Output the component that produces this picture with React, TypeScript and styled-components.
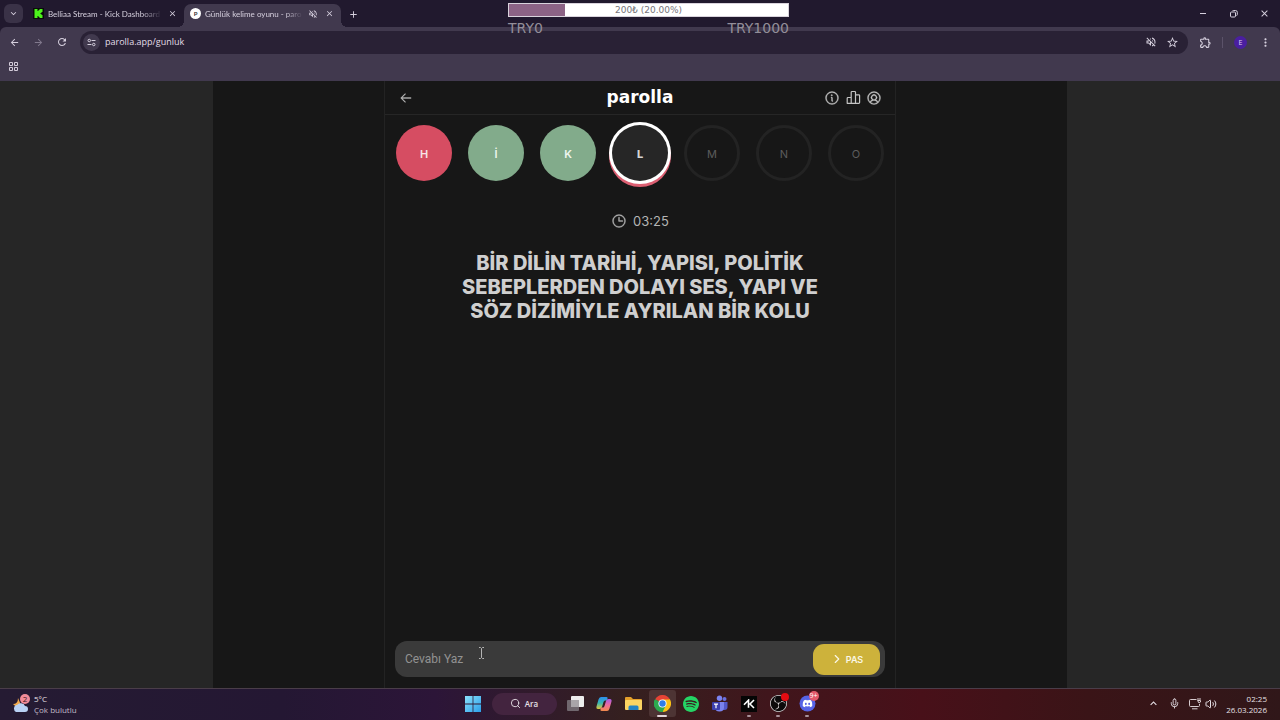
import React from 'react';
import styled, { createGlobalStyle, css } from 'styled-components';
import { SiKick, SiSpotify, SiDiscord, SiObsstudio } from 'react-icons/si';
import { PiUserCircle, PiInfo, PiClock, PiArrowLeft } from 'react-icons/pi';
import {
  MdArrowBack,
  MdArrowForward,
  MdRefresh,
  MdClose,
  MdAdd,
  MdStarBorder,
  MdMoreVert,
  MdKeyboardArrowDown,
  MdKeyboardArrowUp,
  MdOutlineExtension,
  MdOutlineVolumeOff,
} from 'react-icons/md';
import { Mic, Search, Volume2, ChevronRight } from 'lucide-react';

const GlobalStyle = createGlobalStyle`
  *, *::before, *::after { box-sizing: border-box; }
  body {
    margin: 0;
    background: #171717;
    font-family: 'Open Sans', 'Noto Sans', sans-serif;
  }
  button, input { font: inherit; color: inherit; }
  button { border: 0; padding: 0; background: none; cursor: pointer; }
  svg { display: block; flex: none; }
`;

const Screen = styled.div`
  position: relative;
  display: flex;
  flex-direction: column;
  min-height: 100vh;
`;

/* ---------- browser frame ---------- */

const TabStrip = styled.header`
  display: flex;
  align-items: flex-end;
  height: 27px;
  background: #21192e;
  color: #d6d0de;
`;

const TabSearch = styled.button`
  display: grid;
  place-items: center;
  width: 19px;
  height: 19px;
  margin: 0 4px;
  align-self: center;
  border-radius: 6px;
  background: #3a3247;
`;

const Tab = styled.div<{ $active?: boolean }>`
  position: relative;
  display: flex;
  align-items: center;
  gap: 4px;
  width: 157px;
  height: 23px;
  padding: 0 6px 4px;
  font-family: Lato, 'Open Sans', sans-serif;
  font-size: 8px;
  line-height: 12px;
  ${(p) =>
    p.$active &&
    css`
      border-radius: 7px 7px 0 0;
      background: #41394e;
      &::before,
      &::after {
        content: '';
        position: absolute;
        bottom: 0;
        width: 6px;
        height: 6px;
      }
      &::before {
        left: -6px;
        background: radial-gradient(circle at 0 0, transparent 6px, #41394e 6px);
      }
      &::after {
        right: -6px;
        background: radial-gradient(circle at 100% 0, transparent 6px, #41394e 6px);
      }
    `}
`;

const TabTitle = styled.span`
  flex: 1;
  min-width: 0;
  overflow: hidden;
  white-space: nowrap;
  mask-image: linear-gradient(90deg, #000 82%, transparent);
`;

const KickBadge = styled.span`
  display: grid;
  place-items: center;
  width: 11px;
  height: 11px;
  background: #0b0b0b;
  color: #4cf21c;
`;

const ParollaBadge = styled.span`
  display: grid;
  place-items: center;
  width: 11px;
  height: 11px;
  border-radius: 50%;
  background: #fff;
  color: #333;
  font-size: 6px;
  font-weight: 700;
  line-height: 8px;
`;

const IconButton = styled.button<{ $w?: number; $dim?: boolean }>`
  display: grid;
  place-items: center;
  width: ${(p) => p.$w ?? 12}px;
  height: 18px;
  flex: none;
  color: ${(p) => (p.$dim ? '#81798d' : '#d6d0de')};
`;

const NewTab = styled(IconButton)`
  margin: 0 0 4px 3px;
`;

const WindowControls = styled.div`
  display: flex;
  align-self: center;
  margin-left: auto;
`;

const Toolbar = styled.div`
  display: flex;
  align-items: center;
  height: 30px;
  padding: 0 3px 0 2px;
  border-radius: 6px 6px 0 0;
  background: #41394e;
`;

const ToolbarBack = styled.div`
  background: #21192e;
`;

const Omnibox = styled.div`
  display: flex;
  align-items: center;
  flex: 1;
  gap: 5px;
  height: 23px;
  margin: 0 4px 0 6px;
  padding: 0 10px 0 3px;
  border-radius: 12px;
  background: #292135;
`;

const SiteInfo = styled.button`
  display: grid;
  place-items: center;
  width: 17px;
  height: 17px;
  border-radius: 50%;
  background: #41394e;
  color: #d6d0de;
`;

const Address = styled.input`
  flex: 1;
  min-width: 0;
  padding: 0;
  border: 0;
  outline: 0;
  background: none;
  color: #e2dde8;
  font-size: 9px;
  line-height: 14px;
`;

const Divider = styled.span`
  width: 1px;
  height: 11px;
  margin: 0 5px 0 4px;
  background: #5b5269;
`;

const Profile = styled.button`
  width: 13px;
  height: 13px;
  margin: 0 6px;
  border-radius: 50%;
  background: #4a1fa0;
  color: #ddd0f5;
  font-size: 7px;
  line-height: 13px;
`;

const Bookmarks = styled.nav`
  display: flex;
  align-items: center;
  height: 24px;
  padding: 0 7px 5px;
  background: #41394e;
`;

/* ---------- donation goal overlay ---------- */

const Goal = styled.section`
  position: absolute;
  top: 3px;
  left: 50%;
  width: 281px;
  margin-left: -132px;
  font-family: 'DejaVu Sans', sans-serif;
  color: #938e99;
`;

const GoalTrack = styled.div`
  position: relative;
  height: 14px;
  border: 1px solid #d9d3dc;
  background: #fff;
  color: #77747a;
  font-size: 9px;
  line-height: 13px;
  text-align: center;
`;

const GoalFill = styled.div`
  position: absolute;
  inset: 0 auto 0 0;
  background: #8c6385;
`;

const GoalText = styled.span`
  position: relative;
`;

const GoalRange = styled.div`
  display: flex;
  justify-content: space-between;
  padding-top: 2px;
  font-size: 14px;
  line-height: 18px;
`;

/* ---------- game page ---------- */

const Page = styled.main`
  display: flex;
  flex: 1;
  justify-content: center;
  background: #262626;
  font-family: Inter, Roboto, sans-serif;
`;

const Stage = styled.div`
  display: flex;
  justify-content: center;
  width: 66.7%;
  min-width: 512px;
  background: #171717;
`;

const Game = styled.div`
  display: flex;
  flex-direction: column;
  width: 512px;
  border: solid #232323;
  border-width: 0 1px;
`;

const GameHeader = styled.header`
  display: grid;
  grid-template-columns: 1fr auto 1fr;
  align-items: center;
  height: 34px;
  padding: 0 13px;
  border-bottom: 1px solid #262626;
  color: #c4c4c4;
`;

const Brand = styled.h1`
  margin: 0;
  padding-bottom: 2px;
  color: #fff;
  font-family: 'DejaVu Sans', sans-serif;
  font-size: 17px;
  font-weight: 700;
  line-height: 20px;
`;

const HeaderButton = styled.button`
  display: grid;
  place-items: center;
  width: 16px;
  height: 16px;
  stroke-width: 5px;
`;

const HeaderActions = styled.div`
  display: flex;
  justify-content: flex-end;
  gap: 5px;
`;

const Letters = styled.ol`
  display: flex;
  justify-content: center;
  gap: 16px;
  margin: 0;
  padding: 10px 0 30px;
  list-style: none;
`;

type LetterState = 'wrong' | 'right' | 'current' | 'idle';

const letterStyles = {
  wrong: css`
    background: #d64d62;
    color: #f7e3e6;
  `,
  right: css`
    background: #82ab8b;
    color: #eef6ef;
  `,
  current: css`
    background: #262626;
    color: #d4d4d4;
    font-weight: 800;
    box-shadow: 0 0 0 3px #fff, 0 3px 0 3px #dc5f72;
  `,
  idle: css`
    border: 3px solid #232323;
    color: #5c5c5c;
    font-weight: 400;
  `,
};

const Letter = styled.li<{ $state: LetterState }>`
  display: grid;
  place-items: center;
  width: 56px;
  height: 56px;
  padding-top: 1px;
  border-radius: 50%;
  font-size: 11px;
  font-weight: 600;
  ${(p) => letterStyles[p.$state]}
`;

const Timer = styled.div`
  display: flex;
  align-items: center;
  justify-content: center;
  gap: 6px;
  color: #b4b4b4;
  font-size: 13px;
  line-height: 20px;
  stroke-width: 5px;
`;

const Question = styled.h2`
  max-width: 400px;
  margin: 20px auto auto;
  color: #cfcfcf;
  font-size: 20px;
  font-weight: 800;
  line-height: 24px;
  text-align: center;
`;

const AnswerForm = styled.form`
  display: flex;
  align-items: center;
  height: 36px;
  margin: 0 10px 11px;
  padding: 0 5px 0 10px;
  border-radius: 12px;
  background: #3a3a3a;
`;

const AnswerInput = styled.input`
  flex: 1;
  min-width: 0;
  padding: 0;
  border: 0;
  outline: 0;
  background: none;
  color: #ddd;
  font-family: Roboto, sans-serif;
  font-size: 12px;
  &::placeholder {
    color: #929292;
    opacity: 1;
  }
`;

const PassButton = styled.button`
  display: flex;
  align-items: center;
  justify-content: center;
  gap: 2px;
  width: 67px;
  height: 31px;
  border-radius: 11px;
  background: #cdb23b;
  color: #fbf7e6;
  font-size: 9px;
  font-weight: 600;
`;

const Pointer = styled.svg`
  position: absolute;
  left: 478px;
  bottom: 61px;
`;

/* ---------- taskbar ---------- */

const Taskbar = styled.footer`
  display: grid;
  grid-template-columns: 1fr auto 1fr;
  align-items: center;
  height: 32px;
  padding-bottom: 2px;
  border-top: 1px solid #4a3d49;
  background: linear-gradient(90deg, #251b33 0%, #241733 22%, #2c1538 34%, #35201f 49%, #40161c 60%, #481019 72%, #3a1417 85%, #301719 100%);
  color: #e6e0e6;
  font-size: 8px;
  line-height: 11px;
`;

const Weather = styled.button`
  display: flex;
  align-items: center;
  gap: 4px;
  margin-left: 12px;
  justify-self: start;
  text-align: left;
`;

const Muted = styled.div`
  color: #c3bcc8;
`;

const Apps = styled.nav`
  display: flex;
  align-items: center;
  gap: 2px;
`;

const AppButton = styled.button<{ $active?: boolean; $running?: boolean }>`
  position: relative;
  display: grid;
  place-items: center;
  width: 27px;
  height: 27px;
  border-radius: 3px;
  background: ${(p) => (p.$active ? '#4d3434' : 'transparent')};
  ${(p) =>
    (p.$active || p.$running) &&
    css`
      &::after {
        content: '';
        position: absolute;
        bottom: 0;
        width: ${p.$active ? 10 : 4}px;
        height: 2px;
        border-radius: 1px;
        background: ${p.$active ? '#e3d5da' : '#a8929a'};
      }
    `}
`;

const SearchPill = styled.button`
  display: flex;
  align-items: center;
  justify-content: center;
  gap: 4px;
  width: 65px;
  height: 22px;
  margin: 0 3px;
  border-radius: 11px;
  background: #43243f;
  font-weight: 600;
`;

const Tray = styled.div`
  display: flex;
  align-items: center;
  justify-self: end;
  gap: 9px;
  padding-right: 13px;
`;

const TrayPair = styled.div`
  display: flex;
  align-items: center;
  gap: 4px;
`;

const Clock = styled.time`
  text-align: right;
`;

const BadgeDot = styled.span<{ $wide?: boolean }>`
  position: absolute;
  top: ${(p) => (p.$wide ? 1 : 3)}px;
  right: ${(p) => (p.$wide ? 2 : 3)}px;
  width: ${(p) => (p.$wide ? 10 : 8)}px;
  height: ${(p) => (p.$wide ? 10 : 8)}px;
  border-radius: 50%;
  background: ${(p) => (p.$wide ? '#e2596b' : '#e60b12')};
  color: #fff;
  font-size: 7px;
  line-height: 10px;
`;

const KickTile = styled.span`
  display: grid;
  place-items: center;
  width: 16px;
  height: 16px;
  background: #050505;
`;

const ObsTile = styled.span`
  display: grid;
  place-items: center;
  width: 17px;
  height: 17px;
  border-radius: 50%;
  background: #0c0a0b;
  color: #d9d4d6;
`;

/* ---------- drawings ---------- */

const TuneIcon = () => (
  <svg width="9" height="9" viewBox="0 0 18 18" fill="none" stroke="currentColor" strokeWidth="2">
    <circle cx="4.5" cy="5" r="2.5" />
    <path d="M9 5h8M1 13h8" />
    <circle cx="13.5" cy="13" r="2.5" />
  </svg>
);

const GridIcon = () => (
  <svg width="11" height="11" viewBox="0 0 11 11" fill="none" stroke="#d2cbd9" strokeWidth="1">
    <path d="M1.5 1.5h3v3h-3zM6.500 1.5h3v3h-3zM1.500 6.500h3v3h-3zM6.500 6.500h3v3h-3z" />
  </svg>
);

const MinimizeIcon = () => (
  <svg width="8" height="8" viewBox="0 0 8 8" stroke="currentColor">
    <path d="M1 3.500h6" />
  </svg>
);

const RestoreIcon = () => (
  <svg width="8" height="8" viewBox="0 0 8 8" fill="none" stroke="currentColor">
    <rect x="0.500" y="2" width="5" height="5" rx="1" />
    <path d="M2.500 1Q2.500 .5 3.500 .5H5.500Q7.300 .5 7.300 2.300V4.500Q7.300 5.500 6.500 5.500" />
  </svg>
);

const StatsIcon = () => (
  <svg width="15" height="15" viewBox="0 0 15 15" fill="none" stroke="currentColor" strokeWidth="1.200" strokeLinejoin="round">
    <path d="M1.200 13.300V8.300Q1.200 7.500 2 7.500H5.200V13.300ZM5.200 13.300V2.300Q5.200 1.500 6 1.500H8.700Q9.500 1.500 9.500 2.300V13.300ZM9.500 4.800H12.800Q13.600 4.800 13.600 5.600V12.500Q13.600 13.300 12.800 13.300H9.500" />
  </svg>
);

const WeatherIcon = () => (
  <svg width="18" height="20" viewBox="0 0 18 20">
    <path d="M6 4Q6 10 1 10Q4 14 9 11Z" fill="#f1a94c" />
    <path d="M4 18a4 4 0 0 1 0-7q1 0 1 0a4.500 4 0 0 1 8 1a3 3 0 0 1 0 6z" fill="#b9d2f5" />
    <circle cx="13" cy="5" r="5" fill="#f18c99" />
    <text x="13" y="8" textAnchor="middle" fontSize="8" fill="#3d1620">2</text>
  </svg>
);

const WindowsIcon = () => (
  <svg width="16" height="16" viewBox="0 0 16 16">
    <defs>
      <linearGradient id="win" x1="0" y1="0" x2="1" y2="1">
        <stop offset="0" stopColor="#8be2fb" />
        <stop offset="1" stopColor="#2b9fe9" />
      </linearGradient>
    </defs>
    <path d="M0 0h7.600v7.600H0zM8.400 0H16v7.600H8.400zM0 8.400h7.600V16H0zM8.400 8.400H16V16H8.400z" fill="url(#win)" />
  </svg>
);

const TaskViewIcon = () => (
  <svg width="17" height="15" viewBox="0 0 17 15">
    <rect x="4" y="0" width="13" height="11" rx="1" fill="#ededed" />
    <rect x="0" y="4" width="12" height="11" rx="1" fill="#777077" fillOpacity=".9" />
    <rect x="4" y="4" width="8" height="7" fill="#a9a5a9" />
  </svg>
);

const CopilotIcon = () => (
  <svg width="16" height="16" viewBox="0 0 16 16">
    <defs>
      <linearGradient id="copA" x1="0" y1="0" x2="0" y2="1">
        <stop offset="0" stopColor="#2d8df0" />
        <stop offset=".5" stopColor="#36b7b2" />
        <stop offset="1" stopColor="#e5c63b" />
      </linearGradient>
      <linearGradient id="copB" x1="0" y1="0" x2="0" y2="1">
        <stop offset="0" stopColor="#a45be8" />
        <stop offset=".5" stopColor="#ee6b9d" />
        <stop offset="1" stopColor="#f28a4b" />
      </linearGradient>
    </defs>
    <path d="M5 1H10.500Q12 1 11.500 3L11 4.500H9Q8 4.500 7.500 6L6 11Q5.300 13 3.500 13H2Q0 13 .5 10.500L2.500 3.500Q3.200 1 5 1Z" fill="url(#copA)" />
    <path d="M11 15H5.500Q4 15 4.500 13L5 11.500H7Q8 11.500 8.500 10L10 5Q10.700 3 12.500 3H14Q16 3 15.500 5.500L13.500 12.500Q12.800 15 11 15Z" fill="url(#copB)" />
  </svg>
);

const FolderIcon = () => (
  <svg width="17" height="15" viewBox="0 0 17 15">
    <path d="M0 2Q0 1 1 1H6L8 3H16Q17 3 17 4V8H0Z" fill="#e3a02b" />
    <rect x="0" y="4" width="17" height="10" rx="1" fill="#fbd462" />
    <path d="M3.500 14V11Q3.500 9.500 5 9.500H12Q13.500 9.500 13.500 11V14Z" fill="#2383c4" />
  </svg>
);

const ChromeIcon = () => (
  <svg width="17" height="17" viewBox="0 0 48 48">
    <path d="M24 24L3.200 12A24 24 0 0 1 44.800 12Z" fill="#e54335" />
    <path d="M24 24L44.800 12A24 24 0 0 1 24 48Z" fill="#fbc116" />
    <path d="M24 24L24 48A24 24 0 0 1 3.200 12Z" fill="#2da94f" />
    <path d="M24 13H45.300L33.500 29.500L24 48L33 25Z" fill="#fbc116" />
    <path d="M3.200 12L14.500 29.500L24 35L33.500 29.500L24 48A24 24 0 0 1 3.200 12Z" fill="#2da94f" />
    <circle cx="24" cy="24" r="11.500" fill="#fff" />
    <circle cx="24" cy="24" r="9" fill="#2f7de9" />
  </svg>
);

const TeamsIcon = () => (
  <svg width="16" height="17" viewBox="0 0 16 17">
    <circle cx="12.500" cy="4" r="2" fill="#6a70e0" />
    <circle cx="7.500" cy="3.200" r="2.700" fill="#7b83f0" />
    <path d="M9 7H15.500V12Q15.500 15 12.500 15H9Z" fill="#5358c9" />
    <path d="M3 7H12V12.500Q12 16.500 7.500 16.500Q3 16.500 3 12.500Z" fill="#7a82ee" />
    <rect x="0" y="7" width="8" height="8" rx="1" fill="#3c3fae" />
    <path d="M2 9.200H6M4 9.200V13.200" stroke="#fff" strokeWidth="1.200" />
  </svg>
);

const BoltKIcon = () => (
  <svg width="12" height="10" viewBox="0 0 12 10" fill="none" stroke="#fff" strokeWidth="1.600">
    <path d="M1 5.800L5.500 1.200V8.800M11 1L7 5L11 9" />
  </svg>
);

const DisplayIcon = () => (
  <svg width="12" height="12" viewBox="0 0 12 12" fill="none" stroke="#d8ccd0">
    <path d="M7.500 1.500H1.500Q.5 1.500 .5 2.500V7.500Q.5 8.500 1.500 8.500H9.500Q10.500 8.500 10.500 7.500V6M3 10.800H8.500" />
    <path d="M9 0V2M11 0V2M8.500 2.500H11.500V4L10 5Z" />
  </svg>
);

const letters: { char: string; state: LetterState }[] = [
  { char: 'H', state: 'wrong' },
  { char: 'İ', state: 'right' },
  { char: 'K', state: 'right' },
  { char: 'L', state: 'current' },
  { char: 'M', state: 'idle' },
  { char: 'N', state: 'idle' },
  { char: 'O', state: 'idle' },
];

const goalPercent = 20;

export default function App() {
  return (
    <Screen>
      <GlobalStyle />
      <TabStrip>
        <TabSearch aria-label="Sekme ara">
          <MdKeyboardArrowDown size={11} />
        </TabSearch>
        <Tab>
          <KickBadge>
            <SiKick size={9} />
          </KickBadge>
          <TabTitle>Belliaa Stream - Kick Dashboard</TabTitle>
          <IconButton aria-label="Sekmeyi kapat">
            <MdClose size={9} />
          </IconButton>
        </Tab>
        <Tab $active>
          <ParollaBadge>P</ParollaBadge>
          <TabTitle>Günlük kelime oyunu - paro</TabTitle>
          <IconButton aria-label="Sekmenin sesini aç">
            <MdOutlineVolumeOff size={10} />
          </IconButton>
          <IconButton aria-label="Sekmeyi kapat">
            <MdClose size={9} />
          </IconButton>
        </Tab>
        <NewTab $w={18} aria-label="Yeni sekme">
          <MdAdd size={11} />
        </NewTab>
        <WindowControls>
          <IconButton $w={31} aria-label="Küçült">
            <MinimizeIcon />
          </IconButton>
          <IconButton $w={31} aria-label="Geri yükle">
            <RestoreIcon />
          </IconButton>
          <IconButton $w={31} aria-label="Kapat">
            <MdClose size={11} />
          </IconButton>
        </WindowControls>
      </TabStrip>

      <ToolbarBack>
        <Toolbar>
          <IconButton $w={24} aria-label="Geri">
            <MdArrowBack size={11} />
          </IconButton>
          <IconButton $w={24} $dim aria-label="İleri">
            <MdArrowForward size={11} />
          </IconButton>
          <IconButton $w={24} aria-label="Yenile">
            <MdRefresh size={12} />
          </IconButton>
          <Omnibox>
            <SiteInfo aria-label="Site bilgileri">
              <TuneIcon />
            </SiteInfo>
            <Address aria-label="Adres" defaultValue="parolla.app/gunluk" />
            <IconButton $w={21} aria-label="Ses kapalı">
              <MdOutlineVolumeOff size={12} />
            </IconButton>
            <IconButton aria-label="Yer işareti ekle">
              <MdStarBorder size={13} />
            </IconButton>
          </Omnibox>
          <IconButton $w={26} aria-label="Uzantılar">
            <MdOutlineExtension size={13} />
          </IconButton>
          <Divider />
          <Profile aria-label="Profil">E</Profile>
          <IconButton $w={24} aria-label="Menü">
            <MdMoreVert size={13} />
          </IconButton>
        </Toolbar>
      </ToolbarBack>
      <Bookmarks>
        <IconButton aria-label="Uygulamalar">
          <GridIcon />
        </IconButton>
      </Bookmarks>

      <Page>
        <Stage>
          <Game>
            <GameHeader>
              <HeaderButton aria-label="Geri dön">
                <PiArrowLeft size={14} strokeWidth={5} />
              </HeaderButton>
              <Brand>parolla</Brand>
              <HeaderActions>
                <HeaderButton aria-label="Bilgi">
                  <PiInfo size={16} strokeWidth={5} />
                </HeaderButton>
                <HeaderButton aria-label="İstatistikler">
                  <StatsIcon />
                </HeaderButton>
                <HeaderButton aria-label="Hesap">
                  <PiUserCircle size={16} strokeWidth={5} />
                </HeaderButton>
              </HeaderActions>
            </GameHeader>
            <Letters>
              {letters.map((l) => (
                <Letter key={l.char} $state={l.state}>
                  {l.char}
                </Letter>
              ))}
            </Letters>
            <Timer>
              <PiClock size={16} strokeWidth={5} />
              03:25
            </Timer>
            <Question>
              BİR DİLİN TARİHİ, YAPISI, POLİTİK SEBEPLERDEN DOLAYI SES, YAPI VE SÖZ DİZİMİYLE AYRILAN BİR KOLU
            </Question>
            <AnswerForm onSubmit={(e) => e.preventDefault()}>
              <AnswerInput aria-label="Cevap" placeholder="Cevabı Yaz" />
              <PassButton type="button">
                <ChevronRight size={14} />
                PAS
              </PassButton>
            </AnswerForm>
          </Game>
        </Stage>
      </Page>

      <Taskbar>
        <Weather>
          <WeatherIcon />
          <div>
            <div>5°C</div>
            <Muted>Çok bulutlu</Muted>
          </div>
        </Weather>
        <Apps>
          <AppButton aria-label="Başlat">
            <WindowsIcon />
          </AppButton>
          <SearchPill>
            <Search size={11} />
            Ara
          </SearchPill>
          <AppButton aria-label="Görev görünümü">
            <TaskViewIcon />
          </AppButton>
          <AppButton aria-label="Copilot">
            <CopilotIcon />
          </AppButton>
          <AppButton aria-label="Dosya Gezgini">
            <FolderIcon />
          </AppButton>
          <AppButton $active aria-label="Chrome">
            <ChromeIcon />
          </AppButton>
          <AppButton aria-label="Spotify">
            <SiSpotify size={16} color="#25d465" />
          </AppButton>
          <AppButton aria-label="Teams">
            <TeamsIcon />
          </AppButton>
          <AppButton $running aria-label="Kick">
            <KickTile>
              <BoltKIcon />
            </KickTile>
          </AppButton>
          <AppButton $running aria-label="OBS Studio">
            <ObsTile>
              <SiObsstudio size={17} />
            </ObsTile>
            <BadgeDot />
          </AppButton>
          <AppButton $running aria-label="Discord">
            <svg width="17" height="17" viewBox="0 0 17 17">
              <circle cx="8.500" cy="8.500" r="8" fill="#5663e6" />
              <SiDiscord x="3.500" y="3.500" size={10} color="#fff" />
            </svg>
            <BadgeDot $wide>9+</BadgeDot>
          </AppButton>
        </Apps>
        <Tray>
          <MdKeyboardArrowUp size={13} />
          <Mic size={11} />
          <TrayPair>
            <DisplayIcon />
            <Volume2 size={12} />
          </TrayPair>
          <Clock dateTime="2026-03-26T02:25">
            <div>02:25</div>
            <div>26.03.2026</div>
          </Clock>
        </Tray>
      </Taskbar>

      <Goal aria-label="Bağış hedefi">
        <GoalTrack>
          <GoalFill style={{ width: `${goalPercent}%` }} />
          <GoalText>200₺ (20.00%)</GoalText>
        </GoalTrack>
        <GoalRange>
          <span>TRY0</span>
          <span>TRY1000</span>
        </GoalRange>
      </Goal>

      <Pointer width="7" height="12" viewBox="0 0 7 12" fill="none" stroke="#b5b5b5" aria-hidden="true">
        <path d="M1 .5H2.500L3.500 1.500L4.500 .5H6M3.500 1.500V10.500M1 11.500H2.500L3.500 10.500L4.500 11.500H6" />
      </Pointer>
    </Screen>
  );
}
